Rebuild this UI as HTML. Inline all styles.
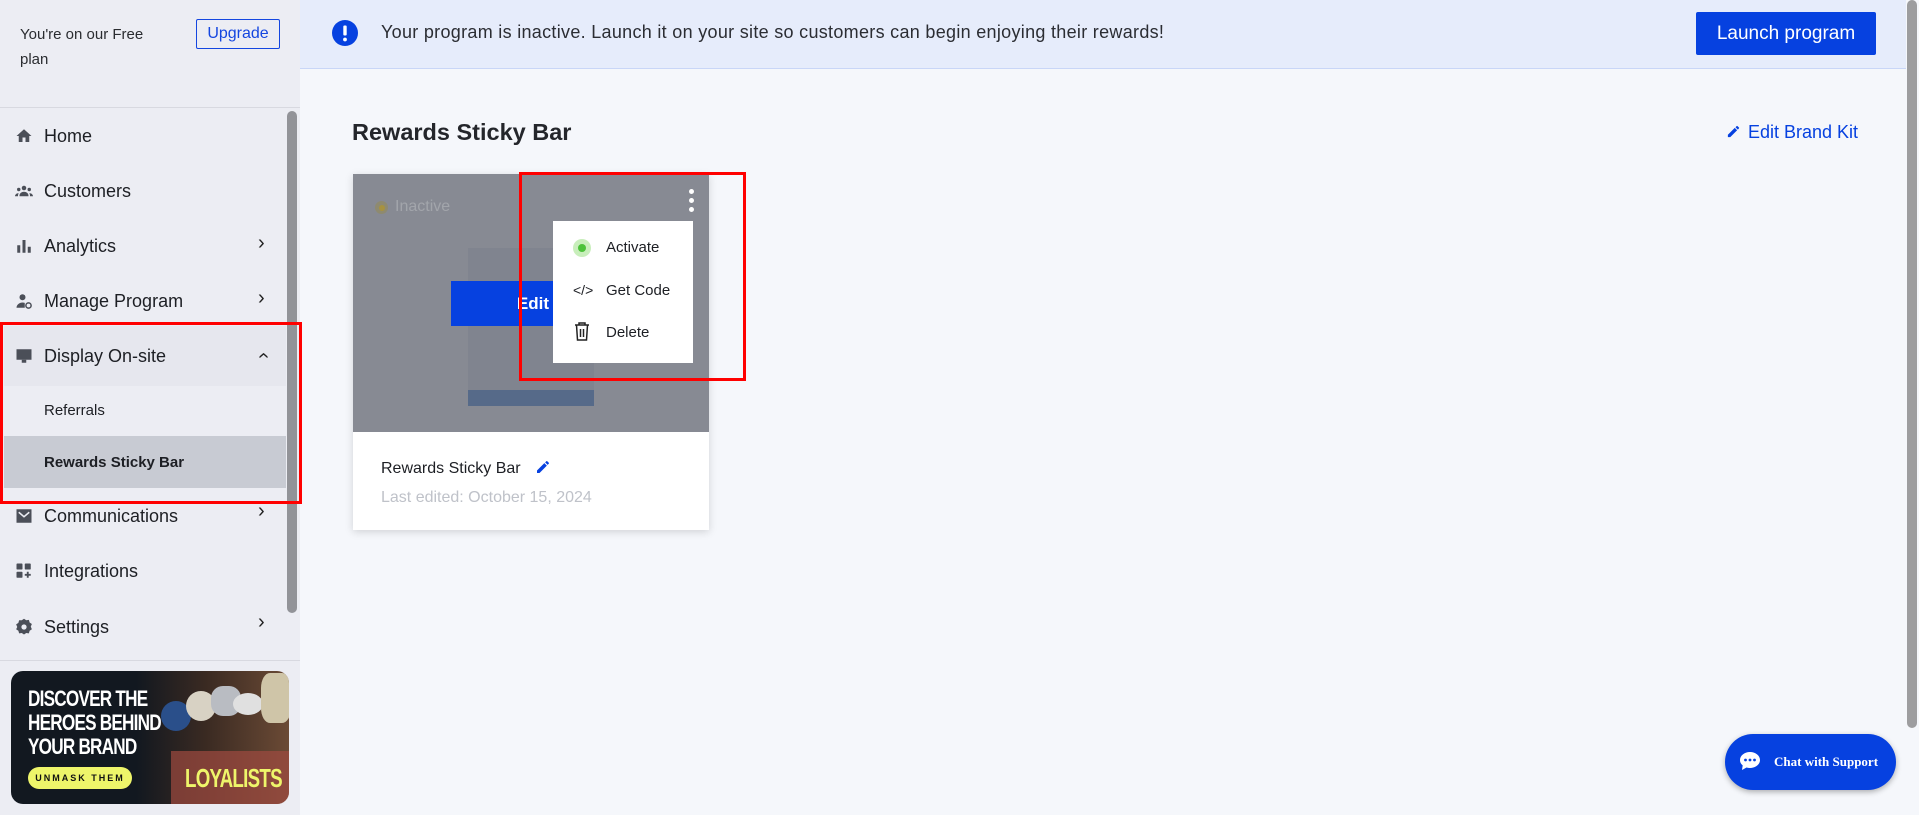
<!DOCTYPE html>
<html><head><meta charset="utf-8">
<style>
*{box-sizing:border-box;margin:0;padding:0}
body{width:1919px;height:815px;overflow:hidden;background:#f5f7fb;font-family:"Liberation Sans",sans-serif;position:relative;color:#1d1f24}
.abs{position:absolute}
#side{left:0;top:0;width:300px;height:815px;background:#ecedf3}
.nav{position:absolute;left:0;width:286px;height:40px;display:flex;align-items:center;font-size:18px;color:#1d1f24}
.nav svg{position:absolute;left:15px}
.nav span{position:absolute;left:44px}
.chev{position:absolute;left:258px;font-size:20px;color:#222;font-weight:normal}
.sub{position:absolute;left:0;width:286px;font-size:15px;display:flex;align-items:center}
.sub span{position:absolute;left:44px}
</style></head><body>
<div id="side" class="abs">
  <div class="abs" style="left:20px;top:22px;font-size:15px;line-height:25px;color:#2a2c30">You're on our Free<br>plan</div>
  <div class="abs" style="left:196px;top:19px;width:84px;height:30px;border:1.5px solid #1446e0;border-radius:2px;color:#1446e0;font-size:16px;display:flex;align-items:center;justify-content:center">Upgrade</div>
  <div class="abs" style="left:0;top:107px;width:300px;height:1px;background:#d8d9e0"></div>

  <div class="nav" style="top:116px"><svg width="18" height="18" viewBox="0 0 24 24"><path d="M10 20v-6h4v6h5v-8h3L12 3 2 12h3v8z" fill="#4b4f58"/></svg><span>Home</span></div>
  <div class="nav" style="top:171px"><svg width="18" height="18" viewBox="0 0 24 24"><circle cx="12" cy="8" r="3" fill="#4b4f58"/><circle cx="5" cy="10" r="2.3" fill="#4b4f58"/><circle cx="19" cy="10" r="2.3" fill="#4b4f58"/><path d="M6 18c0-3 3-5 6-5s6 2 6 5v1H6zM0 19c0-2 2-4 4-4l1 .2C4 16 4 18 4 19zM24 19c0-2-2-4-4-4l-1 .2c1 .8 1 2.8 1 3.8z" fill="#4b4f58"/></svg><span>Customers</span></div>
  <div class="nav" style="top:226px"><svg width="18" height="18" viewBox="0 0 24 24"><rect x="3" y="11" width="4" height="10" fill="#4b4f58"/><rect x="10" y="4" width="4" height="17" fill="#4b4f58"/><rect x="17" y="13" width="4" height="8" fill="#4b4f58"/></svg><span>Analytics</span><b class="chev" style="top:6px">&#x203A;</b></div>
  <div class="nav" style="top:281px"><svg width="18" height="20" viewBox="0 0 24 24"><circle cx="10" cy="7" r="4" fill="#4b4f58"/><path d="M2 21c0-4 4-7 8-7 1 0 2 .2 3 .5V21z" fill="#4b4f58"/><circle cx="18" cy="18" r="3.5" fill="none" stroke="#4b4f58" stroke-width="2"/></svg><span>Manage Program</span><b class="chev" style="top:6px">&#x203A;</b></div>
  <div class="abs" style="left:4px;top:326px;width:282px;height:60px;background:#e6e7ee"></div>
  <div class="nav" style="top:336px"><svg width="18" height="18" viewBox="0 0 24 24"><rect x="2" y="3" width="20" height="14" fill="#4b4f58"/><rect x="9" y="17" width="6" height="4" fill="#4b4f58"/></svg><span>Display On-site</span><b class="chev" style="transform:rotate(-90deg);left:260px;top:8px">&#x203A;</b></div>
  <div class="sub" style="top:390px;height:40px"><span>Referrals</span></div>
  <div class="sub" style="top:436px;height:52px;background:#c8cbd3;left:4px;width:282px"><span style="left:40px;font-weight:bold">Rewards Sticky Bar</span></div>
  <div class="nav" style="top:496px"><svg width="18" height="18" viewBox="0 0 24 24"><rect x="2" y="3" width="20" height="18" fill="#4b4f58"/><path d="M5 7l7 6 7-6" stroke="#ecedf3" stroke-width="2" fill="none"/></svg><span>Communications</span><b class="chev" style="top:4px">&#x203A;</b></div>
  <div class="nav" style="top:551px"><svg width="18" height="18" viewBox="0 0 24 24"><rect x="2" y="2" width="8" height="8" rx="1" fill="#4b4f58"/><rect x="13" y="2" width="8" height="8" rx="1" fill="#4b4f58"/><rect x="2" y="13" width="8" height="8" rx="1" fill="#4b4f58"/><path d="M17 13v8M13 17h8" stroke="#4b4f58" stroke-width="2.5"/></svg><span>Integrations</span></div>
  <div class="nav" style="top:607px"><svg width="18" height="18" viewBox="0 0 24 24"><path d="M12 1l3 2 3.5-.5 1 3.5 3 2-1.5 3.5 1.5 3.5-3 2-1 3.5-3.5-.5-3 2-3-2-3.5.5-1-3.5-3-2L3 12 1.5 8.5l3-2 1-3.5L9 3z" fill="#4b4f58"/><circle cx="12" cy="12" r="3.5" fill="#ecedf3"/></svg><span>Settings</span><b class="chev" style="top:4px">&#x203A;</b></div>

  <div class="abs" style="left:287px;top:111px;width:10px;height:502px;background:#929398;border-radius:5px"></div>
  <div class="abs" style="left:0;top:660px;width:300px;height:1px;background:#d8d9e0"></div>
  <div class="abs" style="left:0;top:322px;width:302px;height:182px;border:3px solid #f00"></div>

  <div class="abs" style="left:11px;top:671px;width:278px;height:133px;border-radius:12px;background:linear-gradient(90deg,#121820 45%,#3a2a22 70%,#6b4a35 100%);overflow:hidden">
    <div class="abs" style="left:150px;top:30px;width:30px;height:30px;border-radius:50%;background:#2a4f8a"></div>
    <div class="abs" style="left:175px;top:20px;width:30px;height:30px;border-radius:50%;background:#d8d2c4"></div>
    <div class="abs" style="left:200px;top:15px;width:30px;height:30px;border-radius:40%;background:#b9bcc2"></div>
    <div class="abs" style="left:222px;top:22px;width:30px;height:22px;border-radius:50%;background:#e0e0e0"></div>
    <div class="abs" style="left:250px;top:2px;width:30px;height:50px;border-radius:30%;background:#cfc5a8"></div>
    <div class="abs" style="left:160px;top:80px;width:118px;height:60px;background:#a04a40;opacity:.7"></div>
    <div class="abs" style="left:17px;top:16px;color:#fff;font-weight:bold;font-size:22px;line-height:24px;letter-spacing:-1px;transform:scaleX(.78);transform-origin:left">DISCOVER THE<br>HEROES BEHIND<br>YOUR BRAND</div>
    <div class="abs" style="left:17px;top:96px;width:104px;height:22px;border-radius:11px;background:#eef56a;color:#111;font-size:9px;font-weight:bold;letter-spacing:2px;display:flex;align-items:center;justify-content:center">UNMASK THEM</div>
    <div class="abs" style="left:174px;top:92px;color:#eef56a;font-weight:bold;font-size:26px;letter-spacing:-1px;transform:scaleX(.72);transform-origin:left">LOYALISTS</div>
  </div>
</div>

<div class="abs" style="left:300px;top:0;width:1606px;height:69px;background:#e6ecfb;border-bottom:1px solid #c9d6f7"></div>
<svg class="abs" style="left:332px;top:20px" width="26" height="26" viewBox="0 0 26 26"><circle cx="13" cy="13" r="13" fill="#0641e0"/><rect x="11.3" y="5.5" width="3.4" height="10" rx="1" fill="#fff"/><circle cx="13" cy="19.5" r="1.9" fill="#fff"/></svg>
<div class="abs" style="left:381px;top:22px;font-size:18px;letter-spacing:0.3px;color:#2b2d33">Your program is inactive. Launch it on your site so customers can begin enjoying their rewards!</div>
<div class="abs" style="left:1696px;top:12px;width:180px;height:43px;background:#0641e0;border-radius:2px;color:#fff;font-size:19px;display:flex;align-items:center;justify-content:center">Launch program</div>
<div class="abs" style="left:1907px;top:0;width:10px;height:728px;background:#9d9d9f;border-radius:5px"></div>

<div class="abs" style="left:352px;top:119px;font-size:23.5px;font-weight:bold;color:#24262b">Rewards Sticky Bar</div>
<svg class="abs" style="left:1726px;top:124px" width="15" height="15" viewBox="0 0 24 24"><path d="M3 17.2V21h3.8L17.8 10l-3.8-3.8zM20.7 7a1 1 0 000-1.4l-2.3-2.3a1 1 0 00-1.4 0l-1.8 1.8 3.8 3.8z" fill="#0641e0"/></svg>
<div class="abs" style="left:1748px;top:122px;font-size:18px;color:#0641e0">Edit Brand Kit</div>

<div class="abs" style="left:353px;top:174px;width:356px;height:356px;background:#fff;box-shadow:0 2px 8px rgba(0,0,0,.15)">
  <div class="abs" style="left:0;top:0;width:356px;height:258px;background:#878a93"></div>
  <div class="abs" style="left:22px;top:27px;width:13px;height:13px;border-radius:50%;background:#8e8a70"></div>
  <div class="abs" style="left:26px;top:31px;width:6px;height:6px;border-radius:50%;background:#a7923f"></div>
  <div class="abs" style="left:42px;top:24px;font-size:16px;color:#a2a5ab">Inactive</div>
  <div class="abs" style="left:115px;top:74px;width:126px;height:142px;background:#80848f"></div>
  <div class="abs" style="left:115px;top:216px;width:126px;height:16px;background:#566a89"></div>
  <div class="abs" style="left:98px;top:107px;width:110px;height:45px;background:#0641e0;color:#fff;font-weight:bold;font-size:17px;display:flex;align-items:center;justify-content:flex-end;padding-right:12px">Edit</div>
  <div class="abs" style="left:336px;top:15px;width:5px;height:5px;border-radius:50%;background:#fff"></div>
  <div class="abs" style="left:336px;top:24px;width:5px;height:5px;border-radius:50%;background:#fff"></div>
  <div class="abs" style="left:336px;top:33px;width:5px;height:5px;border-radius:50%;background:#fff"></div>
  <div class="abs" style="left:200px;top:47px;width:140px;height:142px;background:#fff">
    <div class="abs" style="left:20px;top:18px;width:18px;height:18px;border-radius:50%;background:#c8eebb"></div>
    <div class="abs" style="left:25px;top:23px;width:8px;height:8px;border-radius:50%;background:#4cc23a"></div>
    <div class="abs" style="left:53px;top:18px;font-size:15px;color:#1d1f24">Activate</div>
    <div class="abs" style="left:20px;top:61px;font-size:14px;color:#1d1f24">&lt;/&gt;</div>
    <div class="abs" style="left:53px;top:61px;font-size:15px;color:#1d1f24">Get Code</div>
    <svg class="abs" style="left:20px;top:100px" width="18" height="20" viewBox="0 0 18 20"><path d="M2 4h14M6 4V2h6v2M3.5 4l1 15h9l1-15M7.5 8v8M10.5 8v8" stroke="#222" stroke-width="1.5" fill="none"/></svg>
    <div class="abs" style="left:53px;top:103px;font-size:15px;color:#1d1f24">Delete</div>
  </div>
  <div class="abs" style="left:28px;top:286px;font-size:16px;color:#1d1f24">Rewards Sticky Bar</div>
  <svg class="abs" style="left:182px;top:285px" width="16" height="16" viewBox="0 0 24 24"><path d="M3 17.2V21h3.8L17.8 10l-3.8-3.8zM20.7 7a1 1 0 000-1.4l-2.3-2.3a1 1 0 00-1.4 0l-1.8 1.8 3.8 3.8z" fill="#0641e0"/></svg>
  <div class="abs" style="left:28px;top:315px;font-size:16px;color:#bfc2c9">Last edited: October 15, 2024</div>
</div>
<div class="abs" style="left:519px;top:172px;width:227px;height:209px;border:3px solid #f00"></div>

<div class="abs" style="left:1725px;top:734px;width:171px;height:56px;border-radius:28px;background:#0641e0;box-shadow:0 2px 6px rgba(0,0,0,.3)">
  <svg class="abs" style="left:14px;top:17px" width="22" height="20" viewBox="0 0 22 20"><path d="M11 1C5.5 1 1 4.5 1 9c0 2.2 1 4 2.7 5.4L3 19l4.5-2.5c1.1.3 2.3.5 3.5.5 5.5 0 10-3.5 10-8S16.5 1 11 1z" fill="#fff"/><circle cx="6.5" cy="9" r="1.4" fill="#0641e0"/><circle cx="11" cy="9" r="1.4" fill="#0641e0"/><circle cx="15.5" cy="9" r="1.4" fill="#0641e0"/></svg>
  <div class="abs" style="left:49px;top:20px;font-family:'Liberation Serif',serif;font-weight:bold;font-size:13px;color:#fff">Chat with Support</div>
</div>
</body></html>
